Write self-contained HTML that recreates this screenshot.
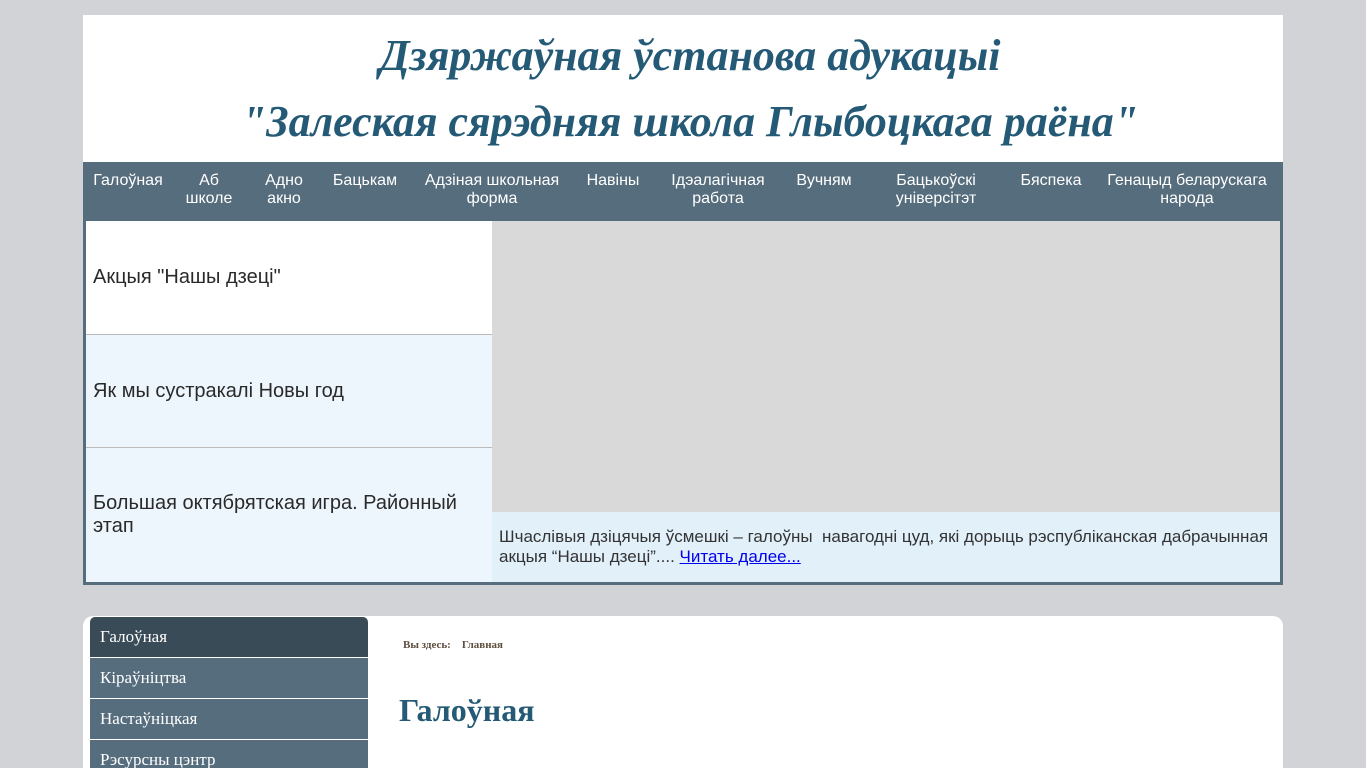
<!DOCTYPE html>
<html><head><meta charset="utf-8"><style>
html,body{margin:0;height:768px;overflow:hidden;}
body{background:#d2d3d7;font-family:"Liberation Sans",sans-serif;position:relative}
.hdr{position:absolute;left:83px;top:15px;width:1200px;height:147px;background:#fff;text-align:center;font-family:"Liberation Serif",serif;font-style:italic;font-weight:bold;color:#245a76;font-size:44px;}
.hdr div{position:absolute;left:14px;right:0}
.nav{position:absolute;left:83px;top:162px;width:1200px;height:57px;background:#566d7e;color:#fff;font-size:16px;}
.nav span{position:absolute;top:10px;text-align:center;line-height:18px;transform:translateX(-50%);white-space:nowrap}
.sl{position:absolute;left:83px;top:219px;width:1194px;height:361px;border:3px solid #566d7e;border-top:2px solid #566d7e;background:#fff}
.it{position:absolute;left:0;width:406px;color:#2a2a2a;font-size:20px;padding-left:7px;box-sizing:border-box;border-bottom:1px solid #bbb;display:flex;align-items:center}
.img{position:absolute;left:406px;top:0;width:788px;height:291px;background:#d9d9d9}
.cap{position:absolute;left:406px;top:291px;width:788px;height:70px;background:#e2f0fa;color:#333;font-size:17px;padding:15px 7px;box-sizing:border-box;line-height:20px}
.cap a{color:#00e;text-decoration:underline}
.main{position:absolute;left:83px;top:616px;width:1200px;height:152px;background:#fff;border-radius:10px 10px 0 0;overflow:hidden}
.menu{position:absolute;left:7px;top:1px;width:278px;font-family:"Liberation Serif",serif;font-size:17px;color:#fff}
.menu div{height:40px;line-height:40px;padding-left:10px;background:#566d7e;border-bottom:1px solid #fff}
</style></head><body>
<div class="hdr"><div style="top:15px">Дзяржаўная ўстанова адукацыі</div><div style="top:81px">"Залеская сярэдняя школа Глыбоцкага раёна"</div></div>
<div class="nav">
<span style="left:45px">Галоўная</span><span style="left:126px">Аб<br>школе</span><span style="left:201px">Адно<br>акно</span><span style="left:282px">Бацькам</span><span style="left:409px">Адзіная школьная<br>форма</span><span style="left:530px">Навіны</span><span style="left:635px">Ідэалагічная<br>работа</span><span style="left:741px">Вучням</span><span style="left:853px">Бацькоўскі<br>універсітэт</span><span style="left:968px">Бяспека</span><span style="left:1104px">Генацыд беларускага<br>народа</span>
</div>
<div class="sl">
<div class="it" style="top:0;height:114px;background:#fff">Акцыя "Нашы дзеці"</div>
<div class="it" style="top:114px;height:113px;background:#eef6fd">Як мы сустракалі Новы год</div>
<div class="it" style="top:227px;height:134px;background:#eef6fd;border:0;line-height:23px">Большая октябрятская игра. Районный этап</div>
<div class="img"></div>
<div class="cap">Шчаслівыя дзіцячыя ўсмешкі – галоўны&nbsp; навагодні цуд, які дорыць рэспубліканская дабрачынная акцыя “Нашы дзеці”.... <a>Читать далее...</a></div>
</div>
<div class="main">
<div class="menu"><div style="background:#3a4b58;border-radius:5px 5px 0 0">Галоўная</div><div>Кіраўніцтва</div><div>Настаўніцкая</div><div>Рэсурсны цэнтр</div></div>
<div style="position:absolute;left:320px;top:23px;font-family:'Liberation Serif',serif;font-weight:bold;font-size:11px;color:#5e4e3e">Вы здесь: &nbsp; &nbsp;Главная</div>
<div style="position:absolute;left:316px;top:76px;font-family:'Liberation Serif',serif;font-weight:bold;font-size:32px;color:#245a76">Галоўная</div>
</div>
</body></html>
